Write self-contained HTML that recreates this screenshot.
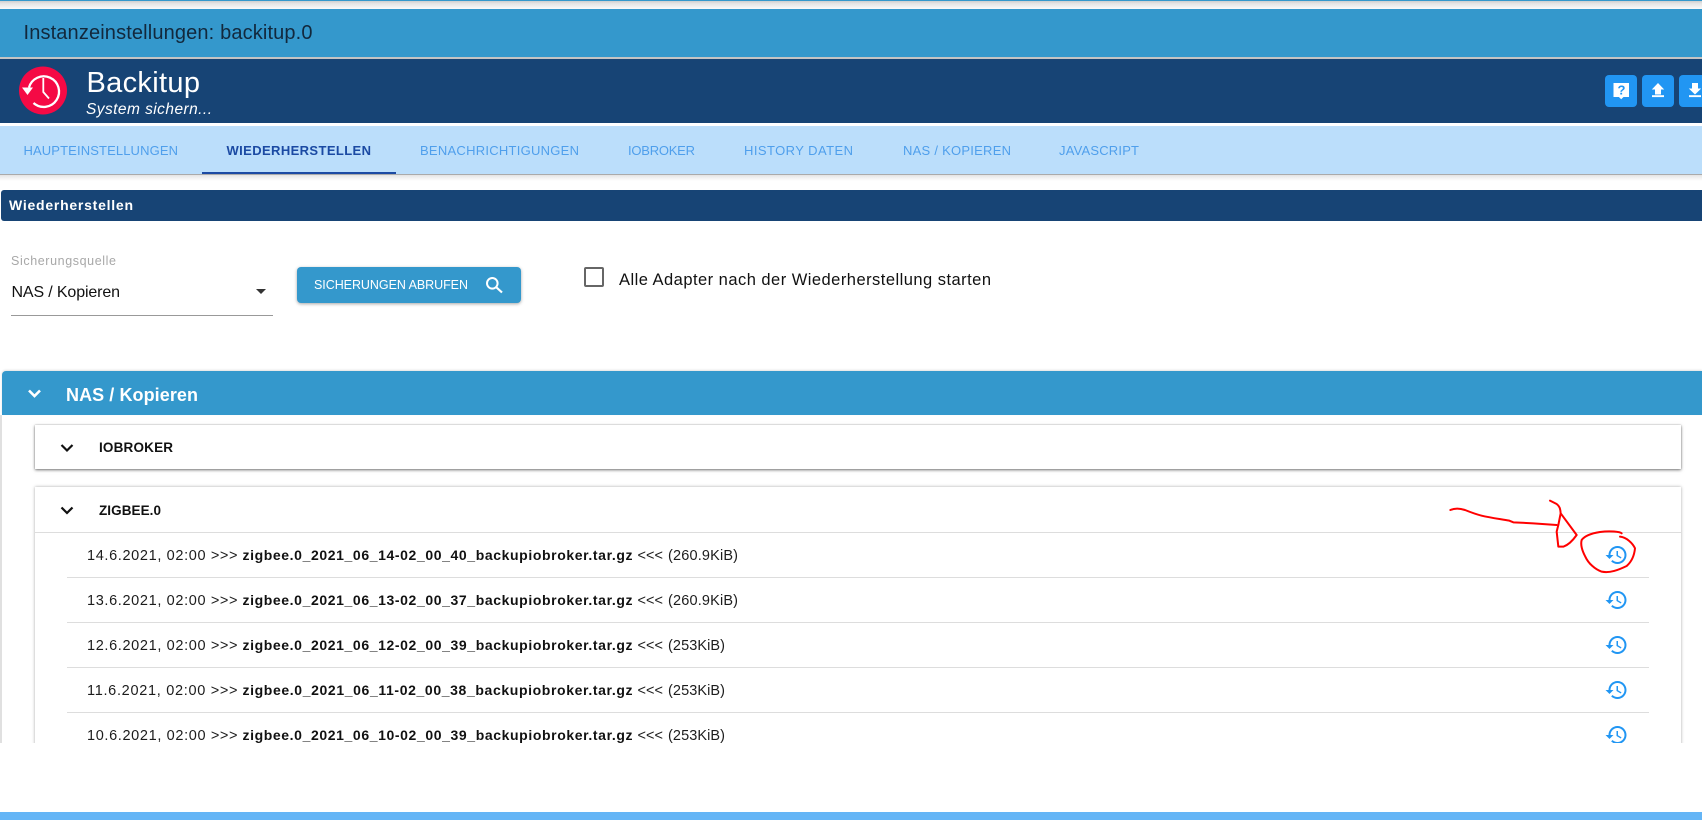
<!DOCTYPE html>
<html lang="de">
<head>
<meta charset="utf-8">
<title>Instanzeinstellungen: backitup.0</title>
<style>
html,body{margin:0;padding:0;width:1702px;height:820px;overflow:hidden;background:#fff;font-family:"Liberation Sans",sans-serif}
.a{position:absolute;display:block}
svg{position:absolute;left:0;top:0;overflow:hidden}
text{font-family:"Liberation Sans",sans-serif;white-space:pre}
</style>
</head>
<body>
<div class="a" style="left:0;top:0;width:1702px;height:1px;background:#3498cc"></div>
<div class="a" style="left:0;top:1px;width:1702px;height:8px;background:linear-gradient(#cfcfcf,#e6e6e6 35%,#fafafa)"></div>
<div class="a" style="left:0;top:9px;width:1702px;height:48px;background:#3498cc"></div>
<div class="a" style="left:0;top:57px;width:1702px;height:2px;background:#c4c4c4"></div>
<div class="a" style="left:0;top:59px;width:1702px;height:64px;background:#174475"></div>
<div class="a" style="left:0;top:126px;width:1702px;height:48px;background:#bbdefb"></div>
<div class="a" style="left:0;top:174px;width:1702px;height:1px;background:#aaa"></div>
<div class="a" style="left:0;top:175px;width:1702px;height:6px;background:linear-gradient(#e4e4e4,#fff)"></div>
<div class="a" style="left:202px;top:172px;width:194px;height:2px;background:#1b4aa3"></div>
<div class="a" style="left:1px;top:190px;width:1701px;height:31px;background:#174475;border-radius:3px 0 0 3px"></div>

<div class="a" style="left:11px;top:315px;width:262px;height:1px;background:#999"></div>
<div class="a" style="left:297px;top:267px;width:224px;height:36px;background:#3498cc;border-radius:4px;box-shadow:0 1px 3px rgba(0,0,0,.35)"></div>
<div class="a" style="left:584px;top:267px;width:16px;height:16px;border:2px solid #666;border-radius:2px"></div>

<!-- content clip -->
<div class="a" style="left:0;top:360px;width:1702px;height:383px;overflow:hidden">
  <div class="a" style="left:0;top:55px;width:2px;height:328px;background:#e0e0e0"></div>
  <div class="a" style="left:2px;top:11px;width:1700px;height:44px;background:#3498cc;border-radius:4px 0 0 0;box-shadow:0 -1px 2px rgba(0,0,0,.12)"></div>
  <div class="a" style="left:35px;top:65px;width:1646px;height:44px;background:#fff;box-shadow:0 1px 3px rgba(0,0,0,.55),0 0 1px rgba(0,0,0,.25)"></div>
  <div class="a" style="left:35px;top:127px;width:1646px;height:300px;background:#fff;box-shadow:0 0 3px rgba(0,0,0,.35)"></div>
  <div class="a" style="left:35px;top:172px;width:1646px;height:1px;background:#ddd"></div>
  <div class="a" style="left:67px;top:217px;width:1582px;height:1px;background:#ddd"></div>
  <div class="a" style="left:67px;top:262px;width:1582px;height:1px;background:#ddd"></div>
  <div class="a" style="left:67px;top:307px;width:1582px;height:1px;background:#ddd"></div>
  <div class="a" style="left:67px;top:352px;width:1582px;height:1px;background:#ddd"></div>
</div>

<div class="a" style="left:0;top:812px;width:1702px;height:8px;background:#64b5f6"></div>

<svg width="1702" height="820" viewBox="0 0 1702 820" xmlns="http://www.w3.org/2000/svg">
  <defs>
    <path id="h" d="M13 3c-4.97 0-9 4.03-9 9H1l3.890 3.890.07.140L9 12H6c0-3.870 3.130-7 7-7s7 3.130 7 7-3.130 7-7 7c-1.930 0-3.680-.79-4.940-2.060l-1.420 1.420C8.270 19.990 10.510 21 13 21c4.970 0 9-4.030 9-9s-4.030-9-9-9zm-1 5v5l4.280 2.540.72-1.210-3.500-2.080V8H12z"/>
    <clipPath id="c"><rect x="0" y="360" width="1702" height="383"/></clipPath>
  </defs>

  <text x="23.500" y="39" font-size="20" fill="#12283c" textLength="289">Instanzeinstellungen: backitup.0</text>

  <!-- logo -->
  <circle cx="43" cy="90.500" r="24" fill="#f50a45"/>
  <path d="M29 87.500A15.300 15.300 0 1 1 33.500 103" fill="none" stroke="#fff" stroke-width="2.300"/>
  <path d="M22 87.500h11l-5.500 7.500z" fill="#fff"/>
  <path d="M43.300 78v14l5.700 6.500" fill="none" stroke="#fff" stroke-width="1.800"/>

  <text x="86.500" y="92" font-size="29" fill="#fff" textLength="113.500">Backitup</text>
  <text x="86" y="114" font-size="15.500" font-style="italic" fill="#fff" textLength="126">System sichern...</text>

  <!-- top buttons -->
  <rect x="1605" y="75" width="32" height="32" rx="4" fill="#2196f3"/>
  <rect x="1642" y="75" width="32" height="32" rx="4" fill="#2196f3"/>
  <rect x="1679" y="75" width="32" height="32" rx="4" fill="#2196f3"/>
  <path d="M1613.500 83h15.500v14h-5.500l-2.300 2.300-2.300-2.300h-5.400z" fill="#fff"/>
  <text x="1617.500" y="94.500" font-size="13" font-weight="bold" fill="#2196f3">?</text>
  <path d="M1658 83l6.200 6.500h-3.200v5h-6v-5h-3.200z" fill="#fff"/>
  <rect x="1652" y="95.200" width="12" height="1.900" fill="#fff"/>
  <path d="M1692 83h6v5.500h3.200l-6.200 6-6.200-6h3.200z" fill="#fff"/>
  <rect x="1689" y="95.200" width="12" height="1.900" fill="#fff"/>

  <!-- tabs -->
  <g font-size="13" fill="#4f9fec">
    <text x="23.500" y="155" textLength="154.500">HAUPTEINSTELLUNGEN</text>
    <text x="226.500" y="155" font-weight="bold" fill="#1b4aa3" textLength="144.500">WIEDERHERSTELLEN</text>
    <text x="420" y="155" textLength="159">BENACHRICHTIGUNGEN</text>
    <text x="628" y="155" textLength="67">IOBROKER</text>
    <text x="744" y="155" textLength="109">HISTORY DATEN</text>
    <text x="903" y="155" textLength="108">NAS / KOPIEREN</text>
    <text x="1059" y="155" textLength="80">JAVASCRIPT</text>
  </g>

  <text x="9" y="210" font-size="14" font-weight="bold" fill="#fff" textLength="124">Wiederherstellen</text>

  <text x="11" y="265" font-size="12.500" fill="#a8a8a8" textLength="105">Sicherungsquelle</text>
  <text x="11.500" y="297" font-size="16" fill="#111" textLength="108.500">NAS / Kopieren</text>
  <path d="M256 289h10l-5 5z" fill="#333"/>

  <text x="314" y="289" font-size="12.500" fill="#fff" textLength="154">SICHERUNGEN ABRUFEN</text>
  <circle cx="492.300" cy="283.300" r="5.300" fill="none" stroke="#fff" stroke-width="2"/>
  <path d="M496 287l6 5.500" stroke="#fff" stroke-width="2.200" fill="none"/>

  <text x="619" y="285" font-size="16.500" fill="#111" textLength="372">Alle Adapter nach der Wiederherstellung starten</text>

  <path d="M29 390.500l5.500 5.500 5.500-5.500" fill="none" stroke="#fff" stroke-width="2.600"/>
  <text x="66" y="401" font-size="18" font-weight="bold" fill="#fff" textLength="132">NAS / Kopieren</text>

  <path d="M61.500 445l5.500 5.500 5.500-5.500" fill="none" stroke="#111" stroke-width="2.200"/>
  <text x="99" y="452" font-size="13.500" font-weight="bold" fill="#111" textLength="74">IOBROKER</text>

  <path d="M61.500 507.500l5.500 5.500 5.500-5.500" fill="none" stroke="#111" stroke-width="2.200"/>
  <text x="99" y="515" font-size="13.500" font-weight="bold" fill="#111" textLength="62">ZIGBEE.0</text>

  <g clip-path="url(#c)" font-size="14.500" fill="#1c1c1c">
    <g>
      <text x="87" y="560" textLength="150.500">14.6.2021, 02:00 &gt;&gt;&gt;</text>
      <text x="242.500" y="560" font-weight="bold" font-size="14" fill="#111" textLength="390">zigbee.0_2021_06_14-02_00_40_backupiobroker.tar.gz</text>
      <text x="637.500" y="560" textLength="25.500">&lt;&lt;&lt;</text>
      <text x="668" y="560" textLength="70">(260.9KiB)</text>
      <use href="#h" x="1604.500" y="543" fill="#2196f3"/>
    </g>
    <g>
      <text x="87" y="605" textLength="150.500">13.6.2021, 02:00 &gt;&gt;&gt;</text>
      <text x="242.500" y="605" font-weight="bold" font-size="14" fill="#111" textLength="390">zigbee.0_2021_06_13-02_00_37_backupiobroker.tar.gz</text>
      <text x="637.500" y="605" textLength="25.500">&lt;&lt;&lt;</text>
      <text x="668" y="605" textLength="70">(260.9KiB)</text>
      <use href="#h" x="1604.500" y="588" fill="#2196f3"/>
    </g>
    <g>
      <text x="87" y="650" textLength="150.500">12.6.2021, 02:00 &gt;&gt;&gt;</text>
      <text x="242.500" y="650" font-weight="bold" font-size="14" fill="#111" textLength="390">zigbee.0_2021_06_12-02_00_39_backupiobroker.tar.gz</text>
      <text x="637.500" y="650" textLength="25.500">&lt;&lt;&lt;</text>
      <text x="668" y="650" textLength="57">(253KiB)</text>
      <use href="#h" x="1604.500" y="633" fill="#2196f3"/>
    </g>
    <g>
      <text x="87" y="695" textLength="150.500">11.6.2021, 02:00 &gt;&gt;&gt;</text>
      <text x="242.500" y="695" font-weight="bold" font-size="14" fill="#111" textLength="390">zigbee.0_2021_06_11-02_00_38_backupiobroker.tar.gz</text>
      <text x="637.500" y="695" textLength="25.500">&lt;&lt;&lt;</text>
      <text x="668" y="695" textLength="57">(253KiB)</text>
      <use href="#h" x="1604.500" y="678" fill="#2196f3"/>
    </g>
    <g>
      <text x="87" y="740" textLength="150.500">10.6.2021, 02:00 &gt;&gt;&gt;</text>
      <text x="242.500" y="740" font-weight="bold" font-size="14" fill="#111" textLength="390">zigbee.0_2021_06_10-02_00_39_backupiobroker.tar.gz</text>
      <text x="637.500" y="740" textLength="25.500">&lt;&lt;&lt;</text>
      <text x="668" y="740" textLength="57">(253KiB)</text>
      <use href="#h" x="1604.500" y="723" fill="#2196f3"/>
    </g>
  </g>

  <!-- red annotation -->
  <g transform="translate(1400 480) scale(.33333)" fill="none" stroke="#f00" stroke-width="6" stroke-linecap="round" stroke-linejoin="round">
    <path d="M151 90C165 84 180 85 195 90C210 96 225 102 245 107C270 113 300 117 328 122L340 127L400 130L470 135"/>
    <path d="M450 62L470 72C478 78 481 85 482 100L475 135L470 155L475 200H490C505 195 518 182 530 165L482 100"/>
    <path d="M665 160C660 155 630 152 600 156C575 160 555 166 545 180C541 195 548 215 556 230C565 250 585 268 605 275C630 280 655 270 680 258C695 245 703 225 705 205C698 190 680 172 660 170"/>
  </g>
</svg>
</body>
</html>
